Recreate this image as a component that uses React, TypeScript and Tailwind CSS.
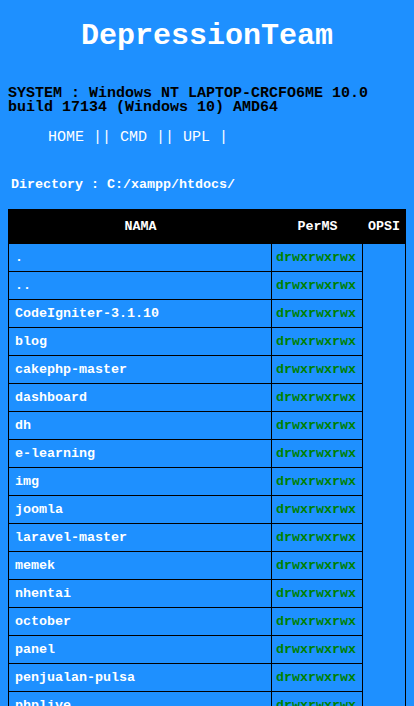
const folders = [
  '.',
  '..',
  'CodeIgniter-3.1.10',
  'blog',
  'cakephp-master',
  'dashboard',
  'dh',
  'e-learning',
  'img',
  'joomla',
  'laravel-master',
  'memek',
  'nhentai',
  'october',
  'panel',
  'penjualan-pulsa',
  'phplive',
]

const App = () => {
  return (
    <div className="min-h-screen bg-[#1e90ff] px-2 pb-2 font-['Liberation_Mono','Courier_New',monospace]">
      <h1 className="pt-[19px] text-center text-[30px] leading-[34px] font-bold text-white">DepressionTeam</h1>

      <div className="mt-[34px] text-[15px] leading-[14px] font-bold text-black">
        SYSTEM : Windows NT LAPTOP-CRCFO6ME 10.0 build 17134 (Windows 10) AMD64
      </div>

      <div className="mt-[14px] pl-10 text-[15px] leading-[17px] whitespace-pre text-white">
        <a href="#">HOME</a> || <a href="#">CMD</a> || <a href="#">UPL</a> |
      </div>

      <div className="mt-[31px] pl-[3px] text-[13.33px] leading-[16px] font-bold text-white">
        Directory : C:/xampp/htdocs/
      </div>

      <div className="mt-[16px] w-full border-x border-black text-[13.33px] font-bold">
        <div className="flex h-[35px] items-center bg-black text-white">
          <div className="w-[263px] text-center">NAMA</div>
          <div className="w-[91px] text-center">PerMS</div>
          <div className="flex-1 text-center">OPSI</div>
        </div>
        {folders.map((name) => (
          <div key={name} className="flex h-[28px]">
            <div className="flex w-[263px] items-center border-r border-b border-black pl-[6px] text-white">{name}</div>
            <div className="flex w-[91px] items-center border-r border-b border-black pl-1 text-[#008000]">drwxrwxrwx</div>
            <div className="flex-1"></div>
          </div>
        ))}
      </div>
    </div>
  )
}

export default App
